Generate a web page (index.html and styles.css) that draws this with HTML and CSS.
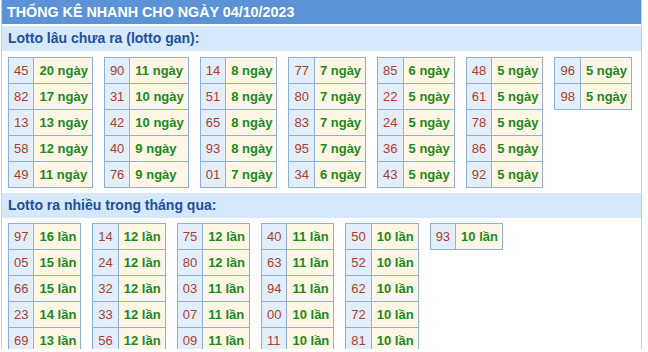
FILE: index.html
```html
<!DOCTYPE html>
<html lang="vi">
<head>
<meta charset="utf-8">
<title>Thống kê nhanh</title>
<link rel="stylesheet" href="styles.css">
</head>
<body>
<div class="wrap">
  <div class="title">THỐNG KÊ NHANH CHO NGÀY 04/10/2023</div>

  <div class="band">Lotto lâu chưa ra (lotto gan):</div>
  <div class="grid">
    <table class="tk"><tr><td class="n">45</td><td class="v">20 ngày</td></tr><tr><td class="n">82</td><td class="v">17 ngày</td></tr><tr><td class="n">13</td><td class="v">13 ngày</td></tr><tr><td class="n">58</td><td class="v">12 ngày</td></tr><tr><td class="n">49</td><td class="v">11 ngày</td></tr></table>
    <table class="tk"><tr><td class="n">90</td><td class="v">11 ngày</td></tr><tr><td class="n">31</td><td class="v">10 ngày</td></tr><tr><td class="n">42</td><td class="v">10 ngày</td></tr><tr><td class="n">40</td><td class="v">9 ngày</td></tr><tr><td class="n">76</td><td class="v">9 ngày</td></tr></table>
    <table class="tk"><tr><td class="n">14</td><td class="v">8 ngày</td></tr><tr><td class="n">51</td><td class="v">8 ngày</td></tr><tr><td class="n">65</td><td class="v">8 ngày</td></tr><tr><td class="n">93</td><td class="v">8 ngày</td></tr><tr><td class="n">01</td><td class="v">7 ngày</td></tr></table>
    <table class="tk"><tr><td class="n">77</td><td class="v">7 ngày</td></tr><tr><td class="n">80</td><td class="v">7 ngày</td></tr><tr><td class="n">83</td><td class="v">7 ngày</td></tr><tr><td class="n">95</td><td class="v">7 ngày</td></tr><tr><td class="n">34</td><td class="v">6 ngày</td></tr></table>
    <table class="tk"><tr><td class="n">85</td><td class="v">6 ngày</td></tr><tr><td class="n">22</td><td class="v">5 ngày</td></tr><tr><td class="n">24</td><td class="v">5 ngày</td></tr><tr><td class="n">36</td><td class="v">5 ngày</td></tr><tr><td class="n">43</td><td class="v">5 ngày</td></tr></table>
    <table class="tk"><tr><td class="n">48</td><td class="v">5 ngày</td></tr><tr><td class="n">61</td><td class="v">5 ngày</td></tr><tr><td class="n">78</td><td class="v">5 ngày</td></tr><tr><td class="n">86</td><td class="v">5 ngày</td></tr><tr><td class="n">92</td><td class="v">5 ngày</td></tr></table>
    <table class="tk"><tr><td class="n">96</td><td class="v">5 ngày</td></tr><tr><td class="n">98</td><td class="v">5 ngày</td></tr></table>
  </div>

  <div class="band band2">Lotto ra nhiều trong tháng qua:</div>
  <div class="grid">
    <table class="tk"><tr><td class="n">97</td><td class="v">16 lần</td></tr><tr><td class="n">05</td><td class="v">15 lần</td></tr><tr><td class="n">66</td><td class="v">15 lần</td></tr><tr><td class="n">23</td><td class="v">14 lần</td></tr><tr><td class="n">69</td><td class="v">13 lần</td></tr></table>
    <table class="tk"><tr><td class="n">14</td><td class="v">12 lần</td></tr><tr><td class="n">24</td><td class="v">12 lần</td></tr><tr><td class="n">32</td><td class="v">12 lần</td></tr><tr><td class="n">33</td><td class="v">12 lần</td></tr><tr><td class="n">56</td><td class="v">12 lần</td></tr></table>
    <table class="tk"><tr><td class="n">75</td><td class="v">12 lần</td></tr><tr><td class="n">80</td><td class="v">12 lần</td></tr><tr><td class="n">03</td><td class="v">11 lần</td></tr><tr><td class="n">07</td><td class="v">11 lần</td></tr><tr><td class="n">09</td><td class="v">11 lần</td></tr></table>
    <table class="tk"><tr><td class="n">40</td><td class="v">11 lần</td></tr><tr><td class="n">63</td><td class="v">11 lần</td></tr><tr><td class="n">94</td><td class="v">11 lần</td></tr><tr><td class="n">00</td><td class="v">10 lần</td></tr><tr><td class="n">11</td><td class="v">10 lần</td></tr></table>
    <table class="tk"><tr><td class="n">50</td><td class="v">10 lần</td></tr><tr><td class="n">52</td><td class="v">10 lần</td></tr><tr><td class="n">62</td><td class="v">10 lần</td></tr><tr><td class="n">72</td><td class="v">10 lần</td></tr><tr><td class="n">81</td><td class="v">10 lần</td></tr></table>
    <table class="tk"><tr><td class="n">93</td><td class="v">10 lần</td></tr></table>
  </div>
</div>
</body>
</html>
```

FILE: styles.css
```css
html, body {
  margin: 0;
  padding: 0;
  background: #ffffff;
}

body {
  font-family: "Liberation Sans", Arial, sans-serif;
}

.wrap {
  width: 639px;
  height: 349px;
  margin-left: 1px;
  border-left: 1px solid #c4cfdc;
  border-right: 1px solid #c4cfdc;
  overflow: hidden;
  background: #ffffff;
}

.title {
  height: 24px;
  line-height: 24px;
  padding-left: 5px;
  background: #5b93d6;
  color: #ffffff;
  font-size: 14.3px;
  font-weight: bold;
  white-space: nowrap;
}

.band {
  margin-top: 2px;
  height: 25px;
  line-height: 25px;
  padding-left: 6px;
  background: #d6e8fb;
  color: #1f4f9c;
  font-size: 14px;
  font-weight: bold;
}

.band2 {
  margin-top: 5px;
}

.grid {
  display: flex;
  align-items: flex-start;
  gap: 11px;
  padding-left: 6px;
  margin-top: 6px;
}

.band2 + .grid {
  margin-top: 5px;
}

.tk {
  border-spacing: 0;
  border-top: 1px solid #8fb0de;
  border-left: 1px solid #8fb0de;
  font-size: 13px;
}

.tk td {
  height: 25px;
  line-height: 25px;
  border-right: 1px solid #8fb0de;
  border-bottom: 1px solid #8fb0de;
  white-space: nowrap;
}

.tk .n {
  background: #e3eefb;
  color: #a8402c;
  padding: 0 5px;
}

.tk .v {
  background: #fff6e5;
  color: #1c891c;
  font-weight: bold;
  padding: 0 4px 0 5px;
}
```
